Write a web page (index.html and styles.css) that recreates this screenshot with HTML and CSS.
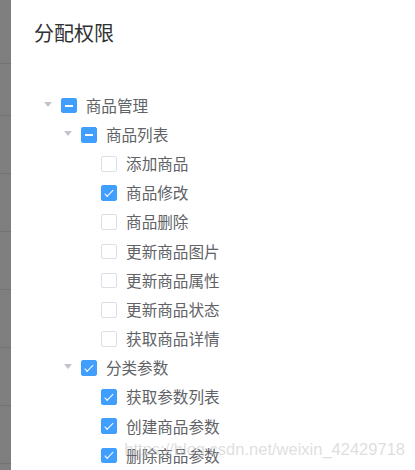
FILE: index.html
```html
<!DOCTYPE html>
<html lang="zh-CN">
<head>
    <meta charset="UTF-8">
    <title>分配权限</title>
    <link rel="stylesheet" href="styles.css">
</head>
<body>
    <div class="page">
        <div class="backdrop">
            <div class="backdrop-row first"></div>
            <div class="backdrop-row second"></div>
            <div class="backdrop-row"></div>
            <div class="backdrop-row"></div>
            <div class="backdrop-row"></div>
            <div class="backdrop-row"></div>
            <div class="backdrop-row"></div>
            <div class="backdrop-row"></div>
        </div>

        <div class="dialog">
            <div class="dialog-header">
                <span class="dialog-title">分配权限</span>
            </div>

            <div class="dialog-body">
                <ul class="tree">
                    <li class="node level-1">
                        <span class="caret"></span>
                        <span class="checkbox indeterminate"></span>
                        <span class="label">商品管理</span>
                    </li>
                    <li class="node level-2">
                        <span class="caret"></span>
                        <span class="checkbox indeterminate"></span>
                        <span class="label">商品列表</span>
                    </li>
                    <li class="node level-3">
                        <span class="caret leaf"></span>
                        <span class="checkbox"></span>
                        <span class="label">添加商品</span>
                    </li>
                    <li class="node level-3">
                        <span class="caret leaf"></span>
                        <span class="checkbox checked"></span>
                        <span class="label">商品修改</span>
                    </li>
                    <li class="node level-3">
                        <span class="caret leaf"></span>
                        <span class="checkbox"></span>
                        <span class="label">商品删除</span>
                    </li>
                    <li class="node level-3">
                        <span class="caret leaf"></span>
                        <span class="checkbox"></span>
                        <span class="label">更新商品图片</span>
                    </li>
                    <li class="node level-3">
                        <span class="caret leaf"></span>
                        <span class="checkbox"></span>
                        <span class="label">更新商品属性</span>
                    </li>
                    <li class="node level-3">
                        <span class="caret leaf"></span>
                        <span class="checkbox"></span>
                        <span class="label">更新商品状态</span>
                    </li>
                    <li class="node level-3">
                        <span class="caret leaf"></span>
                        <span class="checkbox"></span>
                        <span class="label">获取商品详情</span>
                    </li>
                    <li class="node level-2">
                        <span class="caret"></span>
                        <span class="checkbox checked"></span>
                        <span class="label">分类参数</span>
                    </li>
                    <li class="node level-3">
                        <span class="caret leaf"></span>
                        <span class="checkbox checked"></span>
                        <span class="label">获取参数列表</span>
                    </li>
                    <li class="node level-3">
                        <span class="caret leaf"></span>
                        <span class="checkbox checked"></span>
                        <span class="label">创建商品参数</span>
                    </li>
                    <li class="node level-3">
                        <span class="caret leaf"></span>
                        <span class="checkbox checked"></span>
                        <span class="label">删除商品参数</span>
                    </li>
                </ul>
            </div>

            <div class="watermark">https://blog.csdn.net/weixin_42429718</div>
        </div>
    </div>
</body>
</html>
```

FILE: styles.css
```css
:root {
    --primary: #409eff;
    --title: #303133;
    --text: #606266;
    --border: #dcdfe6;
    --caret: #c0c4cc;
    --mask: #7f7f7f;
    --mask-line: #71737b;
}

* {
    margin: 0;
    padding: 0;
    box-sizing: border-box;
}

body {
    font-family: "Noto Sans CJK SC", "Noto Sans", sans-serif;
    background-color: #ffffff;
    overflow: hidden;
}

.page {
    display: flex;
    height: 470px;
}

/* dimmed page behind the dialog */
.backdrop {
    width: 11px;
    flex-shrink: 0;
    background-color: var(--mask);
    display: flex;
    flex-direction: column;
}

.backdrop-row {
    height: 58px;
    flex-shrink: 0;
    border-bottom: 1px solid var(--mask-line);
}

.backdrop-row.first {
    height: 64px;
}

.backdrop-row.second {
    height: 52px;
}

.dialog {
    flex: 1;
    position: relative;
    background-color: #ffffff;
}

.dialog-header {
    padding: 19px 22px 11px 23px;
}

.dialog-title {
    font-size: 20px;
    line-height: 27px;
    color: var(--title);
}

.dialog-body {
    padding: 34px 22px 0 23px;
}

.tree {
    list-style: none;
}

.node {
    display: flex;
    align-items: center;
    height: 29.17px;
    font-size: 15.6px;
    color: var(--text);
}

.level-2 {
    padding-left: 20.2px;
}

.level-3 {
    padding-left: 40.4px;
}

.caret {
    width: 27px;
    height: 100%;
    flex-shrink: 0;
    display: flex;
    align-items: center;
    justify-content: center;
    padding-bottom: 2px;
}

.caret::before {
    content: "";
    border-left: 4px solid transparent;
    border-right: 4px solid transparent;
    border-top: 5px solid var(--caret);
}

.caret.leaf::before {
    border-top-color: transparent;
}

.checkbox {
    width: 15.7px;
    height: 15.7px;
    flex-shrink: 0;
    margin-right: 9px;
    border: 1px solid var(--border);
    border-radius: 2px;
    background-color: #ffffff;
    position: relative;
}

.checkbox.checked,
.checkbox.indeterminate {
    background-color: var(--primary);
    border-color: var(--primary);
}

.checkbox.checked::after {
    content: "";
    position: absolute;
    left: 4.6px;
    top: 1.6px;
    width: 3.4px;
    height: 7.6px;
    border: 1px solid #ffffff;
    border-left: 0;
    border-top: 0;
    transform: rotate(45deg);
}

.checkbox.indeterminate::after {
    content: "";
    position: absolute;
    left: 2.8px;
    right: 2.8px;
    top: 6.3px;
    height: 2px;
    background-color: #ffffff;
}

.label {
    line-height: 1;
    white-space: nowrap;
}

.watermark {
    position: absolute;
    right: 10px;
    top: 440px;
    font-family: "Liberation Sans", Arial, sans-serif;
    font-size: 16.5px;
    color: rgba(200, 200, 200, 0.6);
    white-space: nowrap;
    pointer-events: none;
}
```
